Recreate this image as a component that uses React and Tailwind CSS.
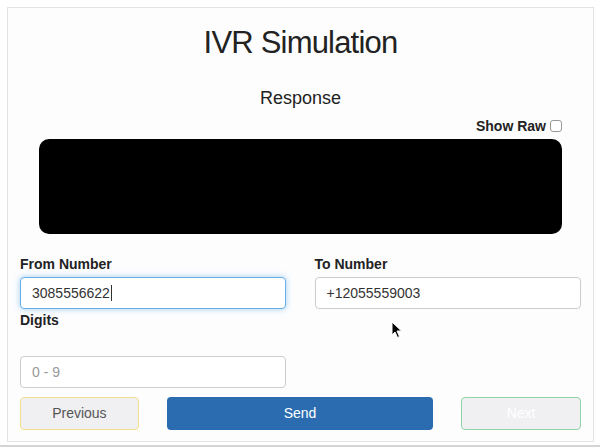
export default function App() {
  return (
    <div className="relative w-[600px] h-[447px] bg-white font-['Liberation_Sans',Arial,sans-serif] text-[#333]">
      <div className="absolute left-0 right-0 bottom-0 h-[2px] bg-[#d4d4d4]" />
      <div className="pt-[7px] pl-[7px]">
        <div className="w-[587px] h-[435px] border border-[#e3e3e3] bg-[#fdfdfe] px-[12px]">
          <h1 className="text-center text-[31px] tracking-[-0.8px] leading-none mt-[19px] text-[#222]">IVR Simulation</h1>
          <h2 className="text-center text-[18px] leading-none mt-[31px] text-[#222]">Response</h2>
          <div className="flex justify-end items-center gap-[4px] mt-[12px] pr-[19px]">
            <span className="text-[14px] font-bold text-[#222] leading-none">Show Raw</span>
            <span className="w-[12px] h-[12px] border border-[#999] rounded-[3px] bg-white" />
          </div>
          <div className="mx-[19px] mt-[6px] h-[95px] bg-black rounded-[10px]" />
          <div className="flex gap-[29px] mt-[23px]">
            <div className="w-[266px]">
              <div className="text-[14px] font-bold text-[#222] leading-none">From Number</div>
              <div className="mt-[6px] h-[32px] border border-[#66afe9] rounded-[4px] bg-white shadow-[0_0_6px_rgba(102,175,233,0.6)] flex items-center px-[11px] text-[14px] text-[#333]">
                3085556622<span className="w-px h-[16px] bg-[#333] ml-px" />
              </div>
              <div className="text-[14px] font-bold text-[#222] leading-none mt-[4px]">Digits</div>
              <div className="mt-[29px] h-[32px] border border-[#ccc] rounded-[4px] bg-white flex items-center px-[11px] text-[14px] text-[#999]">
                0 - 9
              </div>
            </div>
            <div className="w-[267px]">
              <div className="text-[14px] font-bold text-[#222] leading-none">To Number</div>
              <div className="mt-[6px] h-[32px] border border-[#ccc] rounded-[4px] bg-white flex items-center px-[11px] text-[14px] text-[#333]">
                +12055559003
              </div>
            </div>
          </div>
          <div className="flex gap-[28px] mt-[9px]">
            <button className="w-[119px] h-[33px] border border-[#f5e08a] rounded-[4px] bg-[#f0f0f2] text-[14px] text-[#555]">Previous</button>
            <button className="w-[267px] h-[33px] rounded-[4px] bg-[#2b6cb0] text-[14px] text-white">Send</button>
            <button className="w-[120px] h-[33px] border border-[#8fd4a6] rounded-[4px] bg-[#f0f0f2] text-[14px] text-white">Next</button>
          </div>
        </div>
      </div>
      <svg className="absolute left-[391px] top-[321px]" width="12" height="18" viewBox="0 0 12 18">
        <path d="M1 1 L1 14 L4 11 L6.5 16.5 L8.5 15.5 L6 10 L10.5 10 Z" fill="#000" stroke="#fff" strokeWidth="1" />
      </svg>
    </div>
  );
}
